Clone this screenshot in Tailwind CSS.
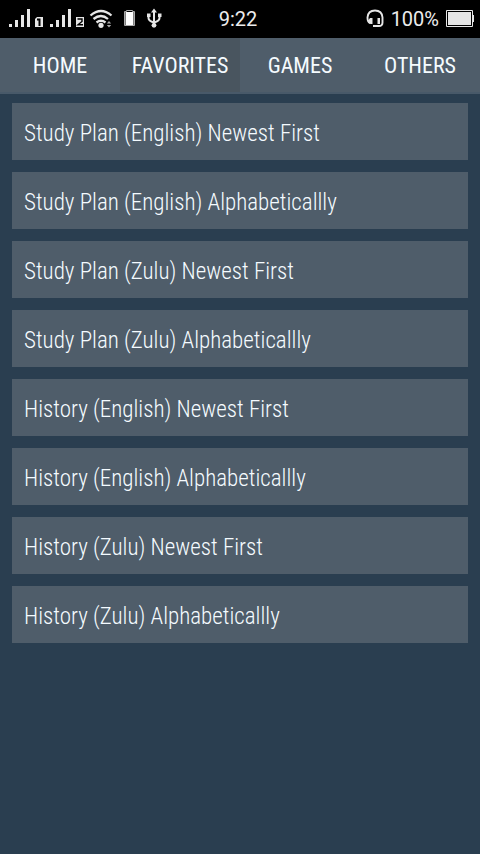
<!DOCTYPE html>
<html lang="en">
<head>
  <meta charset="UTF-8" />
  <meta name="viewport" content="width=device-width, initial-scale=1.0" />
  <title>Favorites</title>
  <script src="https://cdn.jsdelivr.net/npm/@tailwindcss/browser@4"></script>
</head>
<body class="min-h-screen bg-[#2a3e50] text-[#f5fbff] font-['Roboto_Condensed','Roboto',sans-serif]">
  <!-- Status bar -->
  <div class="grid grid-cols-[1fr_auto_1fr] items-center h-[38px] pr-1 bg-black text-[#ececec] text-xl font-['Roboto',sans-serif]">
    <div class="flex items-center pl-2">
      <svg class="w-[156px] h-[38px]" viewBox="8 0 156 38" fill="#e6e6e6">
        <!-- Signal 1 -->
        <path d="M9 24h3v3H9zM15 20h3v7h-3zM21 15h3v12h-3zM27 9h3v18h-3z" />
        <path d="M35 19l2-2h6v10h-8z" />
        <path d="M37 19.500h2.500v6.500" fill="none" stroke="#000" stroke-width="2" />
        <!-- Signal 2 -->
        <path d="M50 24h3v3h-3zM56 20h3v7h-3zM62 15h3v12h-3zM68 9h3v18h-3z" />
        <path d="M76 17h8v10h-8z" />
        <path d="M77.500 19h4.500v2.500l-4 3.300h5" fill="none" stroke="#000" stroke-width="1.400" />
        <!-- Wifi -->
        <g fill="none" stroke="#e6e6e6" stroke-width="2.300">
          <path d="M90.500 15.500q10.500-9 21 0M93.500 19q7.500-6 14.500 0M96.500 22.500q4.500-3.500 9 0" />
        </g>
        <circle cx="101" cy="25.300" r="2.600" />
        <path d="M109 21l2.200 2.500h-4.400zM109 27.500l2.200-2.500h-4.400z" fill="#aaa" />
        <!-- Battery -->
        <path d="M124.500 11.500h2v-1h6v1h2v14h-10z" fill="none" stroke="#aaa" />
        <path d="M125.500 12h8v13h-8z" fill="#fff" />
        <!-- USB -->
        <g fill="none" stroke="#e6e6e6" stroke-width="2">
          <path d="M154 11v14M148.500 15v3q0 3 5.500 4.500 5.500-1.500 5.500-4.500v-3" />
        </g>
        <path d="M154 8.500l3 4h-6zM147 13.500h3.500v3.500H147zM158 13.500h3.500v3.500H158z" />
        <circle cx="154" cy="25.300" r="2.400" />
      </svg>
    </div>
    <time>9:22</time>
    <div class="flex items-center justify-end gap-[7px] pr-[2px]">
      <svg class="w-[18px] h-[20px]" viewBox="0 0 18 20" fill="#e6e6e6">
        <path d="M4 14Q1.500 13 1.500 8.500 2 1.500 9 1.500T16.500 8.500v5q0 3.500-3.500 3.500H9" fill="none" stroke="#e6e6e6" stroke-width="1.900" />
        <path d="M4 9h2.500v6H5Q2 14.500 2 12zM11.500 9H14v6h-2.500zM7 16h4v2H7z" />
      </svg>
      <span>100%</span>
      <svg class="w-[28px] h-[18px]" viewBox="0 0 28 18" fill="#e6e6e6">
        <path d="M.5 .5h26v16H.5z" fill="none" stroke="#e6e6e6" />
        <path d="M2 2h23v13H2zM27 5h1v7h-1z" />
      </svg>
    </div>
  </div>

  <!-- Tabs -->
  <nav class="grid grid-cols-4 h-14 bg-[#4f5d6a] border-b-2 border-[#485969] text-[22px] font-normal">
    <a href="#home" class="flex items-center justify-center">HOME</a>
    <a href="#favorites" aria-current="page" class="flex items-center justify-center bg-[#49555f]">FAVORITES</a>
    <a href="#games" class="flex items-center justify-center">GAMES</a>
    <a href="#others" class="flex items-center justify-center">OTHERS</a>
  </nav>

  <!-- List -->
  <main class="flex flex-col gap-3 px-3 py-[9px] text-[23px] font-light">
    <button class="bg-[#4f5d6a] h-[57px] px-3 pt-1.5 text-left">Study Plan (English) Newest First</button>
    <button class="bg-[#4f5d6a] h-[57px] px-3 pt-1.5 text-left">Study Plan (English) Alphabeticallly</button>
    <button class="bg-[#4f5d6a] h-[57px] px-3 pt-1.5 text-left">Study Plan (Zulu) Newest First</button>
    <button class="bg-[#4f5d6a] h-[57px] px-3 pt-1.5 text-left">Study Plan (Zulu) Alphabeticallly</button>
    <button class="bg-[#4f5d6a] h-[57px] px-3 pt-1.5 text-left">History (English) Newest First</button>
    <button class="bg-[#4f5d6a] h-[57px] px-3 pt-1.5 text-left">History (English) Alphabeticallly</button>
    <button class="bg-[#4f5d6a] h-[57px] px-3 pt-1.5 text-left">History (Zulu) Newest First</button>
    <button class="bg-[#4f5d6a] h-[57px] px-3 pt-1.5 text-left">History (Zulu) Alphabeticallly</button>
  </main>
</body>
</html>
